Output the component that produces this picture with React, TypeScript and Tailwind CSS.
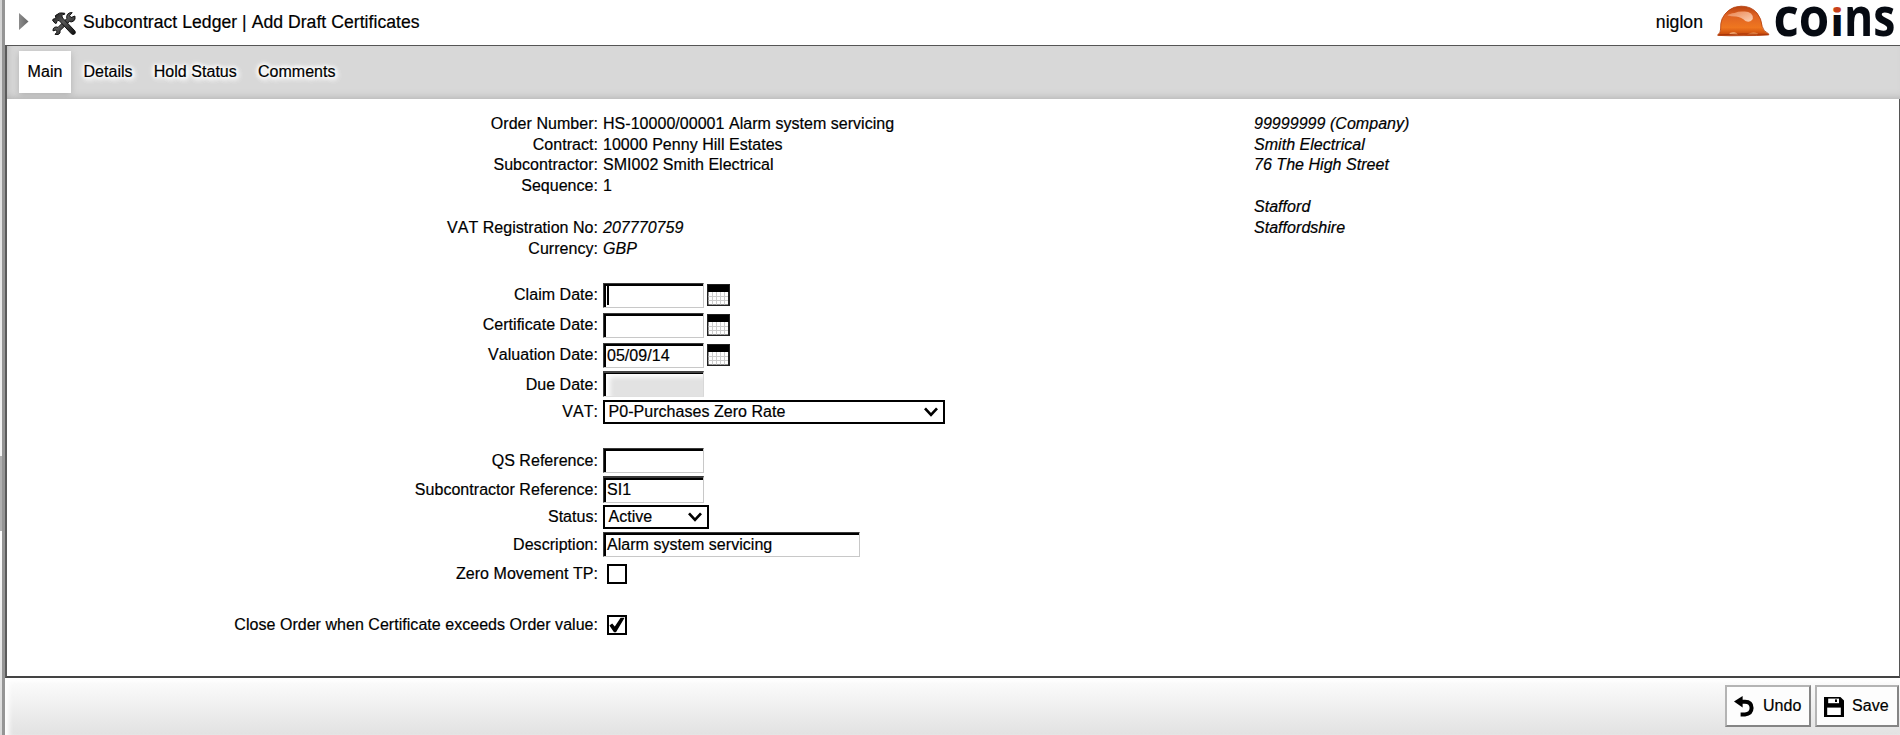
import type { ReactNode } from "react";

const TABS = ["Main", "Details", "Hold Status", "Comments"];

const SUMMARY: { label: string; value: string; italic?: boolean }[] = [
  { label: "Order Number:", value: "HS-10000/00001 Alarm system servicing" },
  { label: "Contract:", value: "10000 Penny Hill Estates" },
  { label: "Subcontractor:", value: "SMI002 Smith Electrical" },
  { label: "Sequence:", value: "1" },
  { label: "", value: "" },
  { label: "VAT Registration No:", value: "207770759", italic: true },
  { label: "Currency:", value: "GBP", italic: true },
];

const ADDRESS = [
  "99999999 (Company)",
  "Smith Electrical",
  "76 The High Street",
  "",
  "Stafford",
  "Staffordshire",
];

const LINE_HEIGHTS = ["h-[21px]", "h-[20px]", "h-[21px]", "h-[21px]", "h-[21px]", "h-[21px]", "h-[21px]"];

function ToolsIcon() {
  return (
    <svg width="24" height="23" viewBox="0 0 24 23" className="block">
      <defs>
        <linearGradient id="steel" x1="0" y1="0" x2="1" y2="1">
          <stop offset="0" stopColor="#1a1a1a" />
          <stop offset="0.45" stopColor="#585858" />
          <stop offset="1" stopColor="#0c0c0c" />
        </linearGradient>
      </defs>
      <g fill="url(#steel)" stroke="#111" strokeWidth="1" strokeLinejoin="round">
        <path d="M20.2 0.6 L17.6 3.6 L19 5.6 L22.9 4 Q23.8 7.6 21.4 9.2 Q19.4 10.4 17.4 9.5 L8 18.6 Q8.6 21 6.8 22.2 Q5 23 3 22.3 L5.2 20 L3.8 18 L1 18.9 Q0.7 16.6 2.4 15.4 Q4.2 14.5 6 15.4 L14.8 6.6 Q14.2 4 15.6 2.2 Q17.4 0.2 20.2 0.6 Z" />
        <path d="M3.4 3.6 Q7.4 -0.4 12.6 1.2 L12.8 2.2 Q10.4 2.4 9.8 3.8 L10.6 6 L22.8 18.8 Q24 20.6 22.6 22 Q20.9 23 19.4 21.8 L7.4 8.8 L6 8.4 L4.8 9.7 L4.4 11.2 L3.2 11.4 L0.6 8.4 L1 7.2 L2.6 6.8 L3.7 5.6 Z" />
      </g>
    </svg>
  );
}

function HelmetLogo() {
  return (
    <svg width="53" height="32" viewBox="0 0 53 32" className="block">
      <defs>
        <linearGradient id="shell" x1="0" y1="0" x2="0" y2="1">
          <stop offset="0" stopColor="#b9430f" />
          <stop offset="0.3" stopColor="#de6224" />
          <stop offset="0.72" stopColor="#ef761f" />
          <stop offset="1" stopColor="#c2430a" />
        </linearGradient>
        <linearGradient id="shine" x1="0" y1="0" x2="1" y2="1">
          <stop offset="0" stopColor="#ea8450" />
          <stop offset="1" stopColor="#fbd0b4" />
        </linearGradient>
      </defs>
      <path
        d="M0.8 29.6 Q3.6 28.4 3.6 24 Q2.8 12.6 11.4 5.6 Q16 1.4 24 1.2 Q34 1 40 8 Q44.4 13.4 45.2 21.4 Q46 26 51.6 28.8 L51.8 29.9 Q40 30.8 27 30.6 Q12 31 0.8 30.4 Z"
        fill="url(#shell)"
        stroke="#b23c0a"
        strokeWidth="0.8"
      />
      <path
        d="M10.4 10.4 Q12.4 8.6 17.6 8 Q21.4 6.4 26 6.6 Q31 6 34 8.6 Q36.6 11 35.8 14 Q33.4 18 28.4 16 Q24.6 12.2 19 11.6 Q14 11.4 10.4 10.4 Z"
        fill="url(#shine)"
      />
      <path d="M11.8 29.6 Q13 27 16.4 27.2 Q20 26.8 21 29.7 Z" fill="#f7b27c" />
      <path d="M30 29.4 Q35 26.4 41 28.4 L40.4 29.5 Z" fill="#f4a15f" />
      <path d="M2 29.8 Q26 28.2 50.6 29.4" fill="none" stroke="#a8360a" strokeWidth="1" />
    </svg>
  );
}

function Wordmark() {
  return (
    <svg
      width="122"
      height="44"
      viewBox="0 0 122 44"
      className="block overflow-visible font-['Open_Sans',sans-serif] font-bold tracking-normal"
      fill="#060a12"
    >
      <defs>
        <linearGradient id="stem" x1="0" y1="-29" x2="0" y2="0" gradientUnits="userSpaceOnUse">
          <stop offset="0.2" stopColor="#c8401a" />
          <stop offset="0.24" stopColor="#060a12" />
        </linearGradient>
      </defs>
      <text transform="translate(-0.6 35.5) scale(0.93 1)" fontSize="53">
        co
      </text>
      <text transform="translate(55.9 35.5) scale(1.25 1)" fontSize="37.5" fill="url(#stem)">
        i
      </text>
      <text transform="translate(70 35.5) scale(0.84 1)" fontSize="53">
        ns
      </text>
    </svg>
  );
}

function CalendarIcon() {
  return (
    <svg width="23" height="22" viewBox="0 0 23 22" className="mt-px ml-[3px] block shrink-0">
      <rect width="23" height="22" fill="#222" />
      <rect x="1" y="1" width="21" height="7" fill="#000" />
      <rect x="1.5" y="8" width="19.5" height="12.5" fill="#fff" />
      <path
        d="M5.5 8v12.5M9.5 8v12.5M13.5 8v12.5M17.5 8v12.5M1.5 12.5h19.5M1.5 16.5h19.5"
        stroke="#ccc"
        strokeWidth="1"
      />
    </svg>
  );
}

function Chevron() {
  return (
    <svg width="14" height="10" viewBox="0 0 14 10" className="block shrink-0">
      <path d="M1 1.4 L7 7.8 L13 1.4" fill="none" stroke="#000" strokeWidth="2.7" />
    </svg>
  );
}

function Field({ label, row, lead, children }: { label: string; row: string; lead: string; children: ReactNode }) {
  return (
    <div className={`flex items-start ${row}`}>
      <div className={`mr-[5px] w-[591px] shrink-0 text-right whitespace-nowrap ${lead}`}>{label}</div>
      {children}
    </div>
  );
}

function TextBox({ size, value = "", caret = false }: { size: string; value?: string; caret?: boolean }) {
  return (
    <div
      className={`flex items-center border border-t-[#3a3a3a] border-r-[#c8c8c8] border-b-[#c8c8c8] border-l-[#3a3a3a] bg-white pl-[3px] leading-[22px] whitespace-nowrap shadow-[inset_2px_2px_0_#000] ${size}`}
    >
      {caret && <span className="h-[19px] w-[1.5px] bg-black" />}
      {value}
    </div>
  );
}

function SelectBox({ size, value }: { size: string; value: string }) {
  return (
    <div className={`flex h-6 items-center justify-between border-2 border-black bg-white pl-[3.5px] ${size}`}>
      <span className="leading-5 whitespace-nowrap">{value}</span>
      <Chevron />
    </div>
  );
}

function CheckBox({ checked = false }: { checked?: boolean }) {
  return (
    <div className="ml-1 flex size-5 items-center justify-center border-2 border-black bg-white">
      {checked && (
        <svg width="16" height="16" viewBox="0 0 16 16" className="block">
          <path d="M0.4 8.4 L3.2 6.6 L5.8 9.4 L11.6 0.8 H15.6 L7 15.2 H5 Z" fill="#000" />
        </svg>
      )}
    </div>
  );
}

function FooterButton({ size, icon, label }: { size: string; icon: ReactNode; label: string }) {
  return (
    <button
      className={`flex h-[42px] items-center border-2 border-t-[#b4b4b4] border-r-[#858585] border-b-[#858585] border-l-[#b4b4b4] bg-[#fdfdfd] ${size}`}
    >
      {icon}
      <span>{label}</span>
    </button>
  );
}

export default function App() {
  return (
    <div className="flex h-[735px] w-[1900px] overflow-hidden bg-white font-['Liberation_Sans',Arial,sans-serif] text-[16px] leading-5 tracking-[0.035px] text-black [font-kerning:none]">
      <div className="flex w-[2px] shrink-0 flex-col">
        <div className="h-[456px] bg-linear-to-b from-[#d2d2d2] to-[#f4f4f4]" />
        <div className="h-[75px] bg-[#b0b0b0]" />
        <div className="flex-1 bg-linear-to-b from-white to-[#d8d8d8]" />
      </div>
      <div className="w-[3px] shrink-0 bg-[#959595]" />

      <div className="flex min-w-0 flex-1 flex-col [-webkit-text-stroke:0.2px_#000]">
        <header className="flex h-[46px] shrink-0 items-start border-b border-[#555] text-[17.6px]">
          <svg width="10" height="18" viewBox="0 0 10 18" className="mt-[13px] ml-[14px] block">
            <defs>
              <linearGradient id="arrow" x1="0" y1="0" x2="1" y2="0">
                <stop offset="0" stopColor="#8c8c8c" />
                <stop offset="1" stopColor="#666" />
              </linearGradient>
            </defs>
            <path d="M0 0 L9.5 8.5 L0 17 Z" fill="url(#arrow)" />
          </svg>
          <div className="mt-3 ml-[23px]">
            <ToolsIcon />
          </div>
          <h1 className="mt-3 ml-[7px] whitespace-nowrap">Subcontract Ledger | Add Draft Certificates</h1>
          <div className="ml-auto flex items-start">
            <span className="mt-3">niglon</span>
            <div className="mt-[5px] ml-[14px]">
              <HelmetLogo />
            </div>
            <div className="mr-1 ml-1 h-11 [-webkit-text-stroke:0]">
              <Wordmark />
            </div>
          </div>
        </header>

        <nav className="flex h-[53px] shrink-0 items-start gap-[3.9px] border-l-2 border-[#5a5a5a] bg-[#d8d8d8] pt-[5px] pl-3 shadow-[inset_3px_-4px_8px_-4px_#a8a8a8]">
          {TABS.map((tab, i) => (
            <div
              key={tab}
              className={
                i === 0
                  ? "h-[42px] bg-white px-[8.6px] leading-[41px] shadow-[0_2px_7px_#b0b0b0]"
                  : "h-[42px] px-[8.6px] leading-[41px] [text-shadow:0_0_4px_#fff,0_0_4px_#fff,0_0_5px_#fff,0_0_6px_#fff,0_0_8px_#fff,2px_2px_6px_#fff,2px_2px_6px_#fff]"
              }
            >
              {tab}
            </div>
          ))}
        </nav>

        <main className="flex h-[579px] shrink-0 border-r border-b-2 border-l-2 border-r-[#555] border-b-[#444] border-l-[#5a5a5a] bg-white pt-[14px]">
          <div className="w-[1247px] shrink-0">
            <div className="h-[170px]">
              {SUMMARY.map((line, i) => (
                <div key={i} className={`flex leading-[21px] ${LINE_HEIGHTS[i]}`}>
                  <div className="mr-[5px] w-[591px] shrink-0 text-right">{line.label}</div>
                  <div className={line.italic ? "italic" : ""}>{line.value}</div>
                </div>
              ))}
            </div>

            <Field label="Claim Date:" row="h-[30px]" lead="leading-[23px]">
              <TextBox size="h-[25px] w-[101px]" caret />
              <CalendarIcon />
            </Field>
            <Field label="Certificate Date:" row="h-[30px]" lead="leading-[23px]">
              <TextBox size="h-[25px] w-[101px]" />
              <CalendarIcon />
            </Field>
            <Field label="Valuation Date:" row="h-[28px]" lead="leading-[23px]">
              <TextBox size="h-[25px] w-[101px]" value="05/09/14" />
              <CalendarIcon />
            </Field>
            <Field label="Due Date:" row="h-[29px]" lead="leading-[27px]">
              <div className="h-[26px] w-[101px] border border-t-2 border-t-[#444] border-r-[#d8d8d8] border-b-[#e0e0e0] border-l-[#3a3a3a] bg-[#e2e2e2] shadow-[inset_2px_1px_0_#000,inset_6px_4px_5px_#fff]" />
            </Field>
            <Field label="VAT:" row="h-[48px]" lead="leading-[23px]">
              <SelectBox size="w-[342px] pr-[5px]" value="P0-Purchases Zero Rate" />
            </Field>
            <Field label="QS Reference:" row="h-[28px]" lead="leading-[25px]">
              <TextBox size="h-[25px] w-[101px]" />
            </Field>
            <Field label="Subcontractor Reference:" row="h-[29px]" lead="leading-[27px]">
              <TextBox size="h-[27px] w-[101px] border-t-2" value="SI1" />
            </Field>
            <Field label="Status:" row="h-[27px]" lead="leading-[23px]">
              <SelectBox size="w-[106px] pr-[5px]" value="Active" />
            </Field>
            <Field label="Description:" row="h-[32px]" lead="leading-[25px]">
              <TextBox size="h-[25px] w-[257px]" value="Alarm system servicing" />
            </Field>
            <Field label="Zero Movement TP:" row="h-[51px]" lead="leading-[19px]">
              <CheckBox />
            </Field>
            <Field label="Close Order when Certificate exceeds Order value:" row="h-5" lead="leading-[19px]">
              <CheckBox checked />
            </Field>
          </div>

          <address className="leading-[21px] italic">
            {ADDRESS.map((line, i) => (
              <div key={i} className={LINE_HEIGHTS[i]}>
                {line}
              </div>
            ))}
          </address>
        </main>

        <footer className="flex flex-1 items-start justify-end gap-1 bg-linear-to-b from-[#fdfdfd] to-[#e2e2e2] pt-[7px] pr-px shadow-[inset_4px_3px_5px_#fff]">
          <FooterButton
            size="w-[86px] pl-[7px]"
            label="Undo"
            icon={
              <svg width="20" height="21" viewBox="0 0 20 21" className="mr-[9px] block">
                <path d="M0 5.6 L8.6 0 V11.4 Z" fill="#000" />
                <path d="M6 5.8 H11 Q17.6 6 17.6 12 Q17.4 18 11 18.4 H6.6" fill="none" stroke="#000" strokeWidth="4" />
              </svg>
            }
          />
          <FooterButton
            size="w-[84px] pl-[7px]"
            label="Save"
            icon={
              <svg width="20" height="20" viewBox="0 0 20 20" className="mt-px mr-[8px] block">
                <path d="M0 0 H16.4 L20 3.6 V20 H0 Z" fill="#000" />
                <rect x="4.2" y="1.6" width="10.8" height="4.6" fill="#fff" />
                <rect x="11" y="2.4" width="2" height="2.6" fill="#000" />
                <rect x="3.2" y="10.6" width="13.6" height="7.4" fill="#fff" />
              </svg>
            }
          />
        </footer>
      </div>
    </div>
  );
}
